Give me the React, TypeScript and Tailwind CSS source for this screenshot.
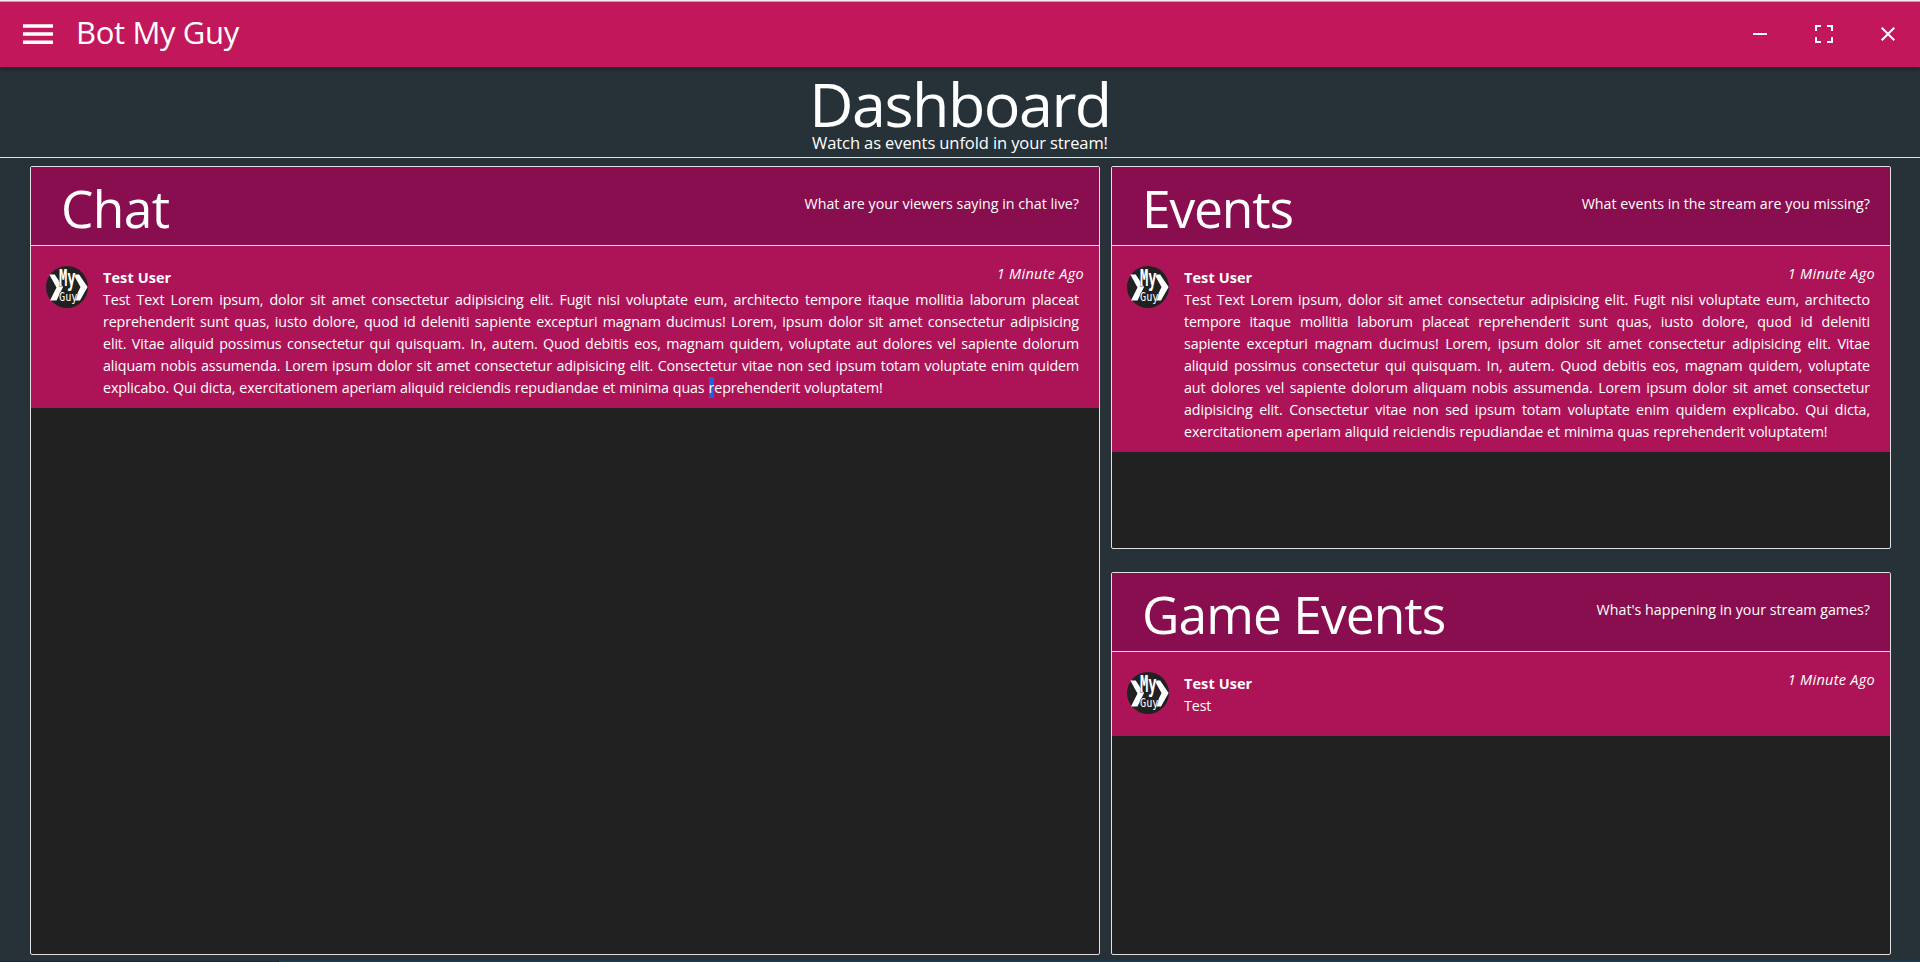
import type { ReactNode } from "react";

function Avatar() {
  return (
    <svg viewBox="0 0 42 42" className="size-[42px] shrink-0">
      <circle cx="21" cy="21" r="21" fill="#212121" />
      <path d="M3.3 8.5h5.4L17 21 10.5 34.5H4L10.5 21.5z" fill="#fff" />
      <path d="M27.5 8.5h5.6L41.6 21 34 34.5h-6L34.5 21z" fill="#fff" />
      <g
        fill="#fff"
        stroke="#212121"
        strokeWidth="1"
        paintOrder="stroke"
        fontFamily="'DejaVu Sans Mono', monospace"
      >
        <text transform="translate(13 20) scale(0.6 1)" fontSize="23" fontWeight="bold">
          My
        </text>
        <text transform="translate(13 35) scale(0.82 1)" fontSize="12.5">
          Guy
        </text>
      </g>
    </svg>
  );
}

interface MessageProps {
  user: string;
  time: string;
  lines: ReactNode[];
}

function Message({ user, time, lines }: MessageProps) {
  return (
    <article className="flex min-h-[84px] bg-[#ad1457] pb-[9px] pl-[15px] pr-5 pt-5 text-[14.25px] leading-[22px]">
      <Avatar />
      <div className="ml-[15px] min-w-0 flex-1 pt-px">
        <div className="flex h-[22px] items-start justify-between">
          <span className="text-[14.5px] font-bold tracking-[0.08px]">{user}</span>
          <time className="-mr-[5px] -mt-1 text-[14.5px] italic tracking-[0.28px]">{time}</time>
        </div>
        {lines.map((line, i) => (
          <p
            key={i}
            className={
              i < lines.length - 1
                ? "whitespace-nowrap text-justify tracking-[-0.11px] [text-align-last:justify]"
                : "whitespace-nowrap tracking-[-0.11px] [word-spacing:0.4px]"
            }
          >
            {line}
          </p>
        ))}
      </div>
    </article>
  );
}

interface PanelProps {
  title: ReactNode;
  subtitle: string;
  className: string;
  children: ReactNode;
}

function Panel({ title, subtitle, className, children }: PanelProps) {
  return (
    <section
      className={`flex flex-col overflow-hidden rounded-xs border border-[#e0e0e0] bg-[#212121] ${className}`}
    >
      <header className="flex h-[79px] shrink-0 items-start justify-between border-b border-[#e0e0e0] bg-[#880e4f] pl-[30px] pr-5">
        <h2 className="mt-4 text-[51.5px] leading-[51px]">{title}</h2>
        <p className="mt-[26px] text-[14.25px] leading-[22px]">{subtitle}</p>
      </header>
      {children}
    </section>
  );
}

const chatLines: ReactNode[] = [
  "Test Text Lorem ipsum, dolor sit amet consectetur adipisicing elit. Fugit nisi voluptate eum, architecto tempore itaque mollitia laborum placeat",
  "reprehenderit sunt quas, iusto dolore, quod id deleniti sapiente excepturi magnam ducimus! Lorem, ipsum dolor sit amet consectetur adipisicing",
  "elit. Vitae aliquid possimus consectetur qui quisquam. In, autem. Quod debitis eos, magnam quidem, voluptate aut dolores vel sapiente dolorum",
  "aliquam nobis assumenda. Lorem ipsum dolor sit amet consectetur adipisicing elit. Consectetur vitae non sed ipsum totam voluptate enim quidem",
  <>
    explicabo. Qui dicta, exercitationem aperiam aliquid reiciendis repudiandae et minima quas{" "}
    <span className="bg-[#1d62dc] py-px">r</span>eprehenderit voluptatem!
  </>,
];

const eventLines: ReactNode[] = [
  "Test Text Lorem ipsum, dolor sit amet consectetur adipisicing elit. Fugit nisi voluptate eum, architecto",
  "tempore itaque mollitia laborum placeat reprehenderit sunt quas, iusto dolore, quod id deleniti",
  "sapiente excepturi magnam ducimus! Lorem, ipsum dolor sit amet consectetur adipisicing elit. Vitae",
  "aliquid possimus consectetur qui quisquam. In, autem. Quod debitis eos, magnam quidem, voluptate",
  "aut dolores vel sapiente dolorum aliquam nobis assumenda. Lorem ipsum dolor sit amet consectetur",
  "adipisicing elit. Consectetur vitae non sed ipsum totam voluptate enim quidem explicabo. Qui dicta,",
  "exercitationem aperiam aliquid reiciendis repudiandae et minima quas reprehenderit voluptatem!",
];

export default function App() {
  return (
    <div className="flex h-[962px] w-[1920px] flex-col overflow-hidden bg-[#263238] font-['Open_Sans',sans-serif] text-white">
      <div className="h-0.5 shrink-0 border-b border-[#b4b4b4] bg-[#f0f0f0]" />
      <nav className="flex h-[65px] shrink-0 items-center justify-between bg-[#c2185b] pl-[18px] shadow-[0_2px_4px_rgba(0,0,0,0.35)]">
        <div className="flex items-center">
          <svg viewBox="0 0 40 40" className="mb-px size-10 fill-white">
            <path d="M5 10.3h30v3.5H5zM5 18.3h30v3.5H5zM5 26.4h30v3.5H5z" />
          </svg>
          <h1 className="ml-[18px] pb-[5px] text-[31px] leading-10 tracking-[-0.35px]">Bot My Guy</h1>
        </div>
        <div className="flex pb-px">
          <div className="flex w-16 justify-center">
            <svg viewBox="0 0 24 24" className="size-6 fill-white">
              <path d="M5 11h14v2H5z" />
            </svg>
          </div>
          <div className="flex w-16 justify-center">
            <svg viewBox="0 0 24 24" className="size-6 fill-white">
              <path d="M3 3h6v2H5v4H3zM15 3h6v6h-2V5h-4zM3 15h2v4h4v2H3zM19 15h2v6h-6v-2h4z" />
            </svg>
          </div>
          <div className="flex w-16 justify-center">
            <svg viewBox="0 0 24 24" className="size-6 fill-white">
              <path d="M19 6.41L17.59 5 12 10.59 6.41 5 5 6.41 10.59 12 5 17.59 6.41 19 12 13.41 17.59 19 19 17.59 13.41 12z" />
            </svg>
          </div>
        </div>
      </nav>

      <div className="flex h-[91px] shrink-0 flex-col items-center border-b border-[#e0e0e0] pt-1.5">
        <h1 className="text-[61px] leading-[61px] tracking-[-1.5px]">Dashboard</h1>
        <p className="-mt-[2px] text-[16.5px] leading-[22px] tracking-[-0.1px]">
          Watch as events unfold in your stream!
        </p>
      </div>

      <main className="mt-2 flex h-[789px] shrink-0 pl-[30px]">
        <Panel
          className="w-[1070px]"
          title={<span className="tracking-[-0.6px]">Chat</span>}
          subtitle="What are your viewers saying in chat live?"
        >
          <Message user="Test User" time="1 Minute Ago" lines={chatLines} />
        </Panel>
        <div className="ml-[11px] flex w-[780px] flex-col gap-[23px]">
          <Panel
            className="h-[383px]"
            title={<span className="tracking-[-1.15px]">Events</span>}
            subtitle="What events in the stream are you missing?"
          >
            <Message user="Test User" time="1 Minute Ago" lines={eventLines} />
          </Panel>
          <Panel
            className="h-[383px]"
            title={<span className="tracking-[-0.95px]">Game Events</span>}
            subtitle="What's happening in your stream games?"
          >
            <Message user="Test User" time="1 Minute Ago" lines={["Test"]} />
          </Panel>
        </div>
      </main>

      <div className="mt-auto flex h-px shrink-0 bg-[#0c4271]">
        <div className="w-[279px] bg-[#0a2a45]" />
      </div>
    </div>
  );
}
